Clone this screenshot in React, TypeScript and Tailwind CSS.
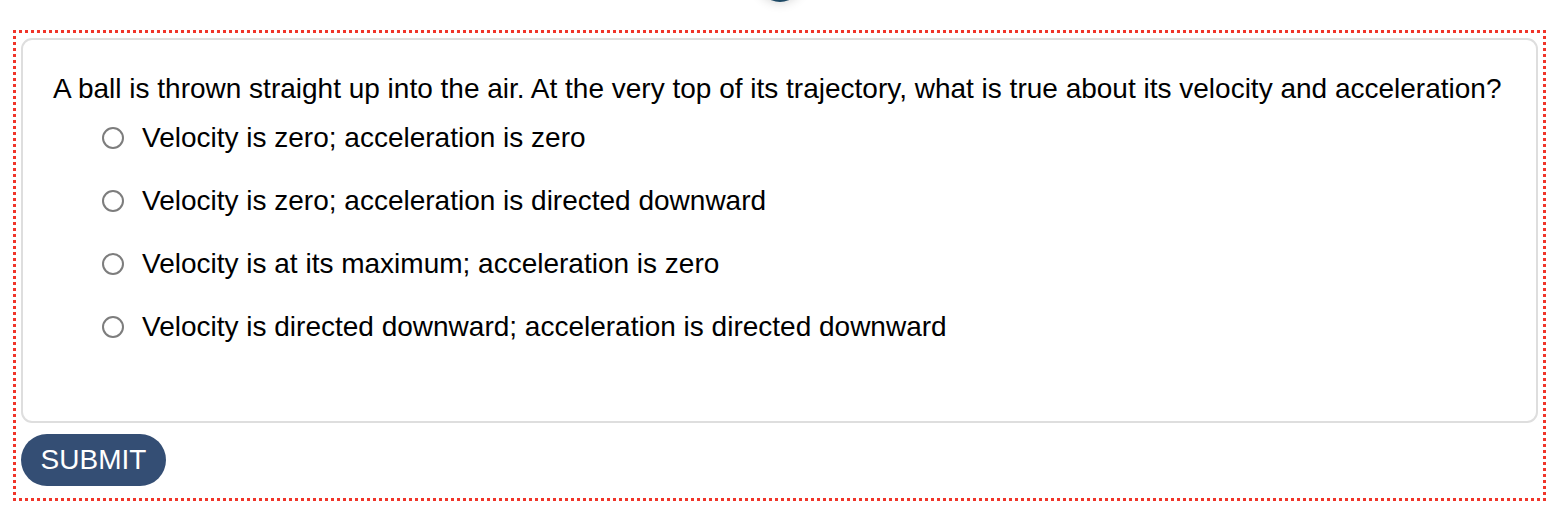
const options = [
  'Velocity is zero; acceleration is zero',
  'Velocity is zero; acceleration is directed downward',
  'Velocity is at its maximum; acceleration is zero',
  'Velocity is directed downward; acceleration is directed downward',
];

export default function App() {
  return (
    <div className="min-h-screen bg-white font-['Liberation_Sans',Arial,sans-serif] text-black">
      {/* tail of the floating control above the quiz */}
      <div className="flex h-[30px] justify-center overflow-hidden">
        <div className="-mt-[42px] ml-[-6px] h-[44px] w-[44px] rounded-full bg-[#1f4a66] shadow-[0_0_12px_rgba(0,0,0,0.2)]" />
      </div>

      <form className="mx-[13px] w-[1533px] border-[3px] border-dotted border-[#f0352a] px-[5px] pt-[5px] pb-[12px]">
        <div className="h-[385px] rounded-[11px] border-2 border-[#dedede] px-[30px] pt-[33px]">
          <p className="text-[28px] leading-[32px]">
            A ball is thrown straight up into the air. At the very top of its trajectory, what is true about its velocity and acceleration?
          </p>
          <div className="mt-[17px] flex flex-col gap-[31px] pl-[49px]">
            {options.map((opt) => (
              <label key={opt} className="flex h-[32px] items-center gap-[18px] text-[28px]">
                <input
                  type="radio"
                  name="answer"
                  className="h-[22px] w-[22px] appearance-none rounded-full border-2 border-[#7d7d7d] bg-white"
                />
                <span>{opt}</span>
              </label>
            ))}
          </div>
        </div>
        <button
          type="button"
          className="mt-[11px] h-[52px] w-[145px] rounded-full bg-[#344e74] text-[28px] text-white"
        >
          SUBMIT
        </button>
      </form>
    </div>
  );
}
